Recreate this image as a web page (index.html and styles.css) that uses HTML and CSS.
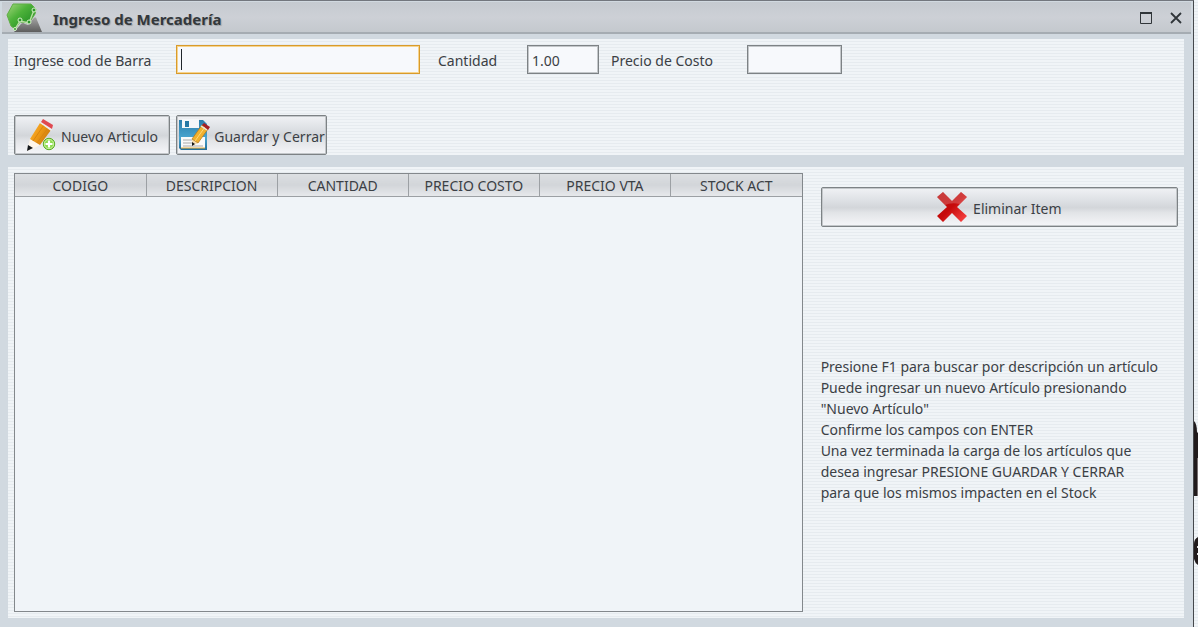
FILE: index.html
```html
<!DOCTYPE html>
<html lang="es">
<head>
<meta charset="utf-8">
<title>Ingreso de Mercadería</title>
<link rel="stylesheet" href="styles.css">
</head>
<body>
<div class="desktop">
  <main class="window">
    <header class="titlebar">
      <svg class="app-icon" width="36" height="30" viewBox="0 0 36 30" aria-hidden="true">
        <defs>
          <linearGradient id="leaf" x1="0" y1="0" x2="1" y2="1"><stop offset="0" stop-color="#a3d67c"/><stop offset=".4" stop-color="#4db23a"/><stop offset="1" stop-color="#12811c"/></linearGradient>
          <linearGradient id="rock" x1="0" y1="0" x2="0" y2="1"><stop offset="0" stop-color="#a5a5a5"/><stop offset="1" stop-color="#5d5d5d"/></linearGradient>
        </defs>
        <path d="M7 2 L25 2 L30 7 L29 12 L23 21 L14 20 L9 27 L5 24 L1 13Z" fill="url(#leaf)" stroke="#5fae45"/>
        <path d="M8 30 L15 22 Q17 20 19 22 L22 23 L27 17 Q30 13 31 18 L36 30Z" fill="url(#rock)"/>
        <path d="M9 27 L14 19 L23 21 L28 8" fill="none" stroke="#b9e0a2" stroke-width="1.4"/>
        <g fill="#2c982b" stroke="#d7f0c8"><circle cx="28" cy="8" r="2"/><circle cx="14" cy="18" r="2"/><circle cx="23" cy="20" r="2"/><circle cx="9" cy="27" r="1.5"/></g>
      </svg>
      <h1 class="title">Ingreso de Mercadería</h1>
      <button class="win-btn" type="button" aria-label="Maximizar"><svg width="12" height="12" viewBox="0 0 12 12"><path d="M.5 1V11.5H11.5V1" fill="none" stroke="#303539"/><path d="M0 1H12" stroke="#303539" stroke-width="2"/></svg></button>
      <button class="win-btn" type="button" aria-label="Cerrar"><svg width="12" height="12" viewBox="0 0 12 12"><path d="M1 1 L11 11 M11 1 L1 11" stroke="#303539" stroke-width="1.8"/></svg></button>
    </header>

    <section class="panel entry">
      <form class="fields">
        <label class="label-code" for="codigo">Ingrese cod de Barra</label>
        <input class="field field-code" id="codigo" type="text" autofocus>
        <label class="label-qty" for="cantidad">Cantidad</label>
        <input class="field field-qty" id="cantidad" type="text" value="1.00">
        <label class="label-cost" for="costo">Precio de Costo</label>
        <input class="field field-cost" id="costo" type="text">
      </form>
      <div class="actions">
        <button class="btn btn-new" type="button">
          <svg width="32" height="32" viewBox="0 0 32 32" aria-hidden="true">
            <defs><linearGradient id="wood" x1="0" y1="0" x2="1" y2=".6"><stop offset="0" stop-color="#f8b43c"/><stop offset=".5" stop-color="#ef9a16"/><stop offset="1" stop-color="#c97810"/></linearGradient></defs>
            <path d="M4 20 L14 26 L7 30 L1 32Z" fill="#fff6ea"/>
            <path d="M2 26 L7 29 L1 32Z" fill="#15191c"/>
            <path d="M4 20 L14 4 L25 11 L14 26Z" fill="url(#wood)"/>
            <path d="M7 22 L18 6 M11 24 L22 9" stroke="#d98510"/>
            <path d="M14 4 L16 2 L27 9 L25 12Z" fill="#ececee"/>
            <path d="M15 3 L17 0 L27 6 L26 10Z" fill="#e04850"/>
            <circle cx="23" cy="25" r="5.7" fill="#8edb4c" stroke="#57a823"/>
            <circle cx="23" cy="25" r="4.7" fill="none" stroke="#c9f2a4"/>
            <path d="M23 21.500V28.500M19.500 25H26.500" stroke="#fff" stroke-width="2.2"/>
          </svg>
          <span>Nuevo Articulo</span>
        </button>
        <button class="btn btn-save" type="button">
          <svg width="32" height="32" viewBox="0 0 32 32" aria-hidden="true">
            <defs><linearGradient id="disk" x1="0" y1="0" x2="0" y2="1"><stop offset="0" stop-color="#2a7dab"/><stop offset=".6" stop-color="#4aa5cf"/><stop offset="1" stop-color="#236f9b"/></linearGradient></defs>
            <path d="M1 1H25L29 5V31H3L1 29Z" fill="url(#disk)"/>
            <path d="M4 0H21V9H4Z" fill="#f4f7f9"/><path d="M7 2H11V8H7Z" fill="#2578a5"/>
            <path d="M3 18H27V29H3Z" fill="#fafafa"/><path d="M5 21H18M5 24H17M5 27H25" stroke="#aaa"/><path d="M3 29H27" stroke="#efb33e"/>
            <path d="M14 20 L20 24 L14 27Z" fill="#f9dfb2"/><path d="M14 23 L17 25 L14 27Z" fill="#16191c"/>
            <path d="M14 20 L24 6 L30 10 L20 24Z" fill="#f1b12e" stroke="#b77713" stroke-width=".7"/><path d="M17 22 L27 8" stroke="#ffd978"/>
            <path d="M24 6 L26 4 L32 8 L30 11Z" fill="#a51e24"/><path d="M23 7L29 11" stroke="#e6e6e6" stroke-width="1.5"/>
          </svg>
          <span>Guardar y Cerrar</span>
        </button>
      </div>
    </section>

    <section class="panel content">
      <div class="grid">
        <table class="items">
          <thead><tr><th>CODIGO</th><th>DESCRIPCION</th><th>CANTIDAD</th><th>PRECIO COSTO</th><th>PRECIO VTA</th><th>STOCK ACT</th></tr></thead>
        </table>
      </div>
      <aside class="side">
        <button class="btn btn-delete" type="button">
          <svg width="30" height="30" viewBox="0 0 30 30" aria-hidden="true">
            <defs><linearGradient id="cross" x1="0" y1="0" x2="1" y2="1"><stop offset="0" stop-color="#b80c0c"/><stop offset=".5" stop-color="#c60b0b"/><stop offset="1" stop-color="#ff4a4a"/></linearGradient></defs>
            <path d="M6 0 L15 9 L24 0 L30 5 L20 15 L30 24 L24 30 L15 21 L6 30 L0 24 L10 15 L0 5Z" fill="url(#cross)"/>
            <path d="M6 0 L15 9 L24 0 L30 5 L23 12 Q14 10 8 13 L0 5Z" fill="#fff" opacity=".2"/>
          </svg>
          <span>Eliminar Item</span>
        </button>
        <p class="help">Presione F1 para buscar por descripción un artículo<br>Puede ingresar un nuevo Artículo presionando<br>"Nuevo Artículo"<br>Confirme los campos con ENTER<br>Una vez terminada la carga de los artículos que<br>desea ingresar PRESIONE GUARDAR Y CERRAR<br>para que los mismos impacten en el Stock</p>
      </aside>
    </section>
  </main>
  <svg class="backdrop" width="4" height="627" viewBox="0 0 4 627" aria-hidden="true">
    <path d="M0 421 Q3 424 3 432 L4 433V496H0Z M4 537 Q0 539 0 544V559Q1 563 4 565Z" fill="#211b1c"/>
    <path d="M3 458H4V496H3Z" fill="#776f70"/><path d="M3 546H4V548H3ZM3 553H4V555H3Z" fill="#ddd"/>
  </svg>
</div>
</body>
</html>
```
FILE: styles.css
```css
* { box-sizing: border-box; }

body {
  margin: 0;
  color: #3b4045;
  font: 14px/21px "Noto Sans", "Open Sans", sans-serif;
}

button, input { font: inherit; color: inherit; }

.desktop,
.panel {
  background: repeating-linear-gradient(#f0f4f7 0 2px, #e6ebef 2px 3px);
}

.desktop { display: flex; min-height: 100vh; }

.window {
  flex: 1;
  min-width: 0;
  display: flex;
  flex-direction: column;
  padding: 1px 2px 9px;
  background: #d1d9e0;
  border-top: 1px solid #73777e;
  border-right: 1px solid #45484c;
}

.backdrop { flex: none; }

.titlebar {
  display: flex;
  align-items: center;
  height: 32px;
  margin-bottom: 5px;
  background: linear-gradient(#c5cad0, #cdd0d6 50%, #c4c9ce);
  border-bottom: 2px solid #a5acb2;
}

.app-icon { margin-left: 4px; }

.title {
  flex: 1;
  margin: 5px 0 0 11px;
  font-size: 15px;
  font-weight: 700;
  color: #33383c;
  text-shadow: 1px 1px 1px #9a9fa5;
}

.win-btn {
  display: grid;
  place-items: center;
  width: 30px;
  height: 28px;
  padding: 2px 0 0;
  border: 0;
  background: none;
}

.panel { margin: 0 7px 0 6px; padding: 6px; }

.entry { padding-bottom: 0; margin-bottom: 12px; }

.fields { display: flex; align-items: center; }

.fields label { padding-top: 2px; }
.label-code { width: 162px; }
.label-qty { width: 89px; margin-left: 18px; }
.label-cost { width: 136px; margin-left: 12px; }

.field {
  height: 29px;
  padding: 2px 4px 0;
  background: #f7f9fc;
  border: 1px solid #7d8285;
  outline: 0;
  box-shadow: inset 0 0 0 1px #c3c7ca;
}

.field:focus { border-color: #d99b2b; box-shadow: inset 0 0 0 1px #f6d48e; }

.field-code { width: 244px; }

/* Steady text cursor in the empty, focused field */
.field-code:focus:placeholder-shown,
.field-code:focus {
  caret-color: transparent;
  background: linear-gradient(#20262b, #20262b) 4px center / 1px 21px no-repeat #f7f9fc;
}

.field-qty { width: 72px; }
.field-cost { width: 95px; }

.actions { display: flex; gap: 6px; margin-top: 41px; }

.btn {
  display: flex;
  align-items: center;
  justify-content: center;
  gap: 6px;
  height: 40px;
  padding: 0;
  white-space: nowrap;
  background: linear-gradient(#f0f2f5, #dfe2e6 30%, #d3d6da 52%, #e2e4e7 65%, #f5f6f9);
  border: 1px solid #7d8285;
  border-radius: 2px;
  box-shadow: inset 0 0 0 1px #c3c7ca;
}

.btn span { padding-top: 3px; }

.btn-new { width: 156px; gap: 3px; }
.btn-save { width: 151px; gap: 4px; }

.content { flex: 1; display: flex; gap: 18px; }

.grid {
  flex: 788;
  background: #f0f4f8;
  border: 1px solid #83888c;
}

.items { width: 100%; table-layout: fixed; border-collapse: collapse; }

.items th {
  height: 22px;
  padding: 2px 0 0;
  font-weight: 400;
  line-height: 19px;
  background: linear-gradient(#dcdfe2, #d2d5d9 50%, #e6e8eb);
  border-bottom: 1px solid #9ca0a4;
}

.items th + th { border-left: 1px solid #9ca0a4; }

.side { flex: 358; padding-top: 14px; }

.btn-delete { width: 100%; }

.help { margin: 129px 0 0; white-space: nowrap; }
```
